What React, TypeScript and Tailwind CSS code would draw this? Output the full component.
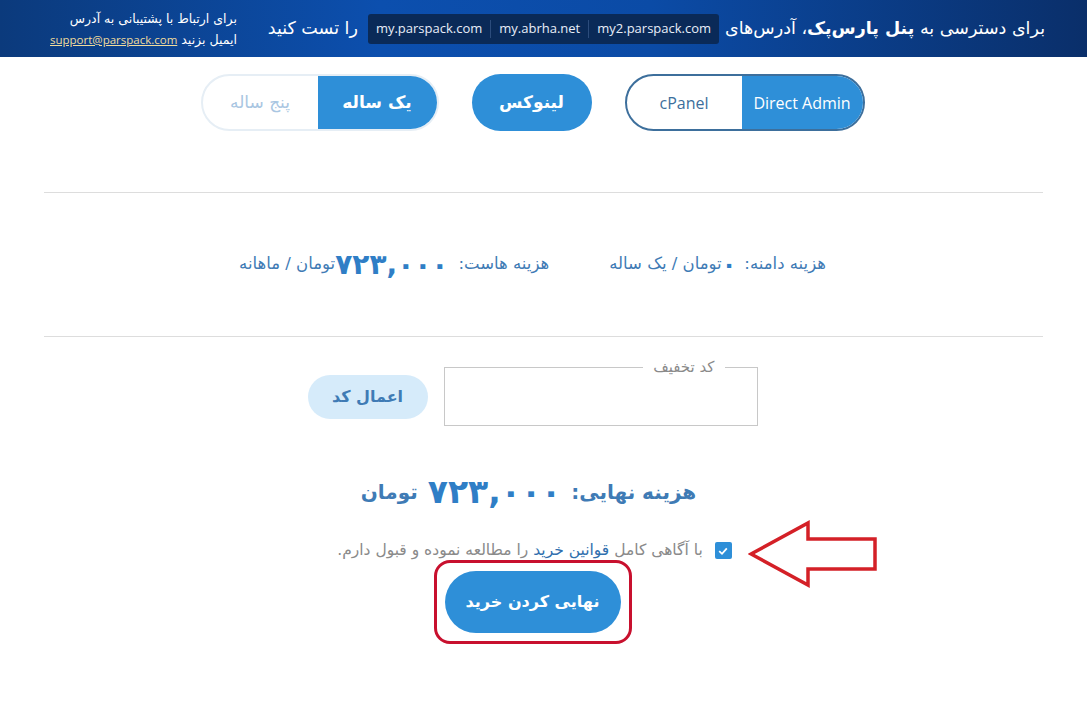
import React from "react";

const fa = { fontFamily: '"DejaVu Sans", "Noto Sans", sans-serif' };
const lat = { fontFamily: '"Open Sans", "Noto Sans", sans-serif' };

function Header() {
  return (
    <div
      className="h-[57px] w-full flex items-center pr-[42px] pl-[50px] text-white"
      style={{ background: "linear-gradient(90deg,#0b3a7c 0%,#0c4fae 35%,#0b4ba6 60%,#0a2f6a 100%)" }}
    >
      <div className="text-[17.5px] whitespace-nowrap" style={fa}>
        برای دسترسی به <b>پنل پارس‌پک</b>، آدرس‌های
      </div>
      <div
        className="mr-[6px] h-[30px] flex items-center rounded-[3px] bg-[#0a2a58] text-[13px] text-[#e8eef8]"
        dir="ltr"
        style={lat}
      >
        <span className="px-[8px]">my.parspack.com</span>
        <span className="w-px h-[18px] bg-[#2c4c7c]" />
        <span className="px-[8px]">my.abrha.net</span>
        <span className="w-px h-[18px] bg-[#2c4c7c]" />
        <span className="px-[8px]">my2.parspack.com</span>
      </div>
      <div className="mr-[10px] text-[17.5px] whitespace-nowrap" style={fa}>
        را تست کنید
      </div>
      <div className="mr-auto text-[12.5px] leading-[21px] whitespace-nowrap" style={fa}>
        <div>برای ارتباط با پشتیبانی به آدرس</div>
        <div>
          ایمیل بزنید{" "}
          <span className="underline text-[#f0dc9c] text-[11.5px]" style={lat}>
            support@parspack.com
          </span>
        </div>
      </div>
    </div>
  );
}

function Toggles() {
  return (
    <div className="flex justify-center items-center gap-[33px] pt-[17px] pr-[22px]" style={fa}>
      <div className="flex h-[57px] w-[240px] rounded-full border-2 border-[#3d6f9c] overflow-hidden" dir="rtl">
        <div className="w-[121px] flex items-center justify-center bg-[#2e8fd8] text-white text-[16px]" style={lat}>
          Direct Admin
        </div>
        <div className="flex-1 flex items-center justify-center text-[#3d6f9c] text-[16px]" style={lat}>
          cPanel
        </div>
      </div>
      <div className="h-[57px] w-[120px] rounded-full bg-[#2e8fd8] text-white font-bold text-[17px] flex items-center justify-center">
        لینوکس
      </div>
      <div className="flex h-[57px] w-[238px] rounded-full border-2 border-[#e6eef5] overflow-hidden">
        <div className="w-[119px] flex items-center justify-center bg-[#2e8fd8] text-white font-bold text-[17px]">
          یک ساله
        </div>
        <div className="flex-1 flex items-center justify-center text-[#a9c6e2] text-[17px]">پنج ساله</div>
      </div>
    </div>
  );
}

function PriceRow() {
  return (
    <div className="flex justify-center items-center gap-[60px] h-[143px] text-[#3f7bb5] text-[16.5px] pr-[22px]" style={fa}>
      <div className="flex items-center">
        <span>هزینه دامنه:</span>
        <span className="mr-[8px] font-bold text-[24px] text-[#2f7ec6]">۰</span>
        <span>تومان / یک ساله</span>
      </div>
      <div className="flex items-center">
        <span>هزینه هاست:</span>
        <span className="mr-[10px] font-bold text-[28px] text-[#2f7ec6]">۷۲۳,۰۰۰</span>
        <span>تومان / ماهانه</span>
      </div>
    </div>
  );
}

function Discount() {
  return (
    <div className="flex justify-center items-start gap-[16px] pt-[22px] pr-[22px]" style={fa}>
      <fieldset className="w-[314px] h-[70px] border border-[#c8c8c8] px-[14px] pb-[6px] -mt-[3px]">
        <legend className="px-[10px] text-[15px] text-[#8a8a8a] mr-[18px]">کد تخفیف</legend>
      </fieldset>
      <button className="mt-[16px] h-[44px] w-[120px] rounded-full bg-[#d6ebfa] text-[#3f7bb5] font-bold text-[16px]">
        اعمال کد
      </button>
    </div>
  );
}

function Final() {
  return (
    <div className="flex flex-col items-center pt-[46px]" style={fa}>
      <div className="flex items-center text-[#3f7bb5] font-bold text-[20px] h-[40px] pr-[30px]">
        <span>هزینه نهایی:</span>
        <span className="mx-[10px] text-[33px] text-[#2f7ec6]">۷۲۳,۰۰۰</span>
        <span>تومان</span>
      </div>
      <div className="relative w-full flex justify-center">
        <div className="flex items-center mt-[27px] text-[15.5px] text-[#8a8a8a] pr-[18px]">
          <span className="w-[17px] h-[17px] rounded-[2px] bg-[#2e8fd8] flex items-center justify-center ml-[12px]">
            <svg width="12" height="12" viewBox="0 0 12 12">
              <path d="M2.2 6.2 L5 8.8 L9.8 3.4" fill="none" stroke="white" strokeWidth="1.8" />
            </svg>
          </span>
          <span>
            با آگاهی کامل <span className="text-[#2f6fae]">قوانین خرید</span> را مطالعه نموده و قبول دارم.
          </span>
        </div>
        <svg className="absolute left-[748px] top-[7px]" width="132" height="70" viewBox="0 0 132 70">
          <path
            d="M3 35 L60 4 L60 20 L127 20 L127 50 L60 50 L60 66 Z"
            fill="white"
            stroke="#d42027"
            strokeWidth="3.5"
            strokeLinejoin="miter"
          />
        </svg>
      </div>
      <div className="mt-[-2px] mr-[22px] rounded-[16px] border-[3px] border-[#c8102e] p-[8px]">
        <button className="h-[62px] w-[176px] rounded-full bg-[#2e8fd8] text-white font-bold text-[16px]">
          نهایی کردن خرید
        </button>
      </div>
    </div>
  );
}

export default function App() {
  return (
    <div dir="rtl" className="w-[1087px] h-[713px] bg-white overflow-hidden">
      <Header />
      <Toggles />
      <div className="mx-[44px] mt-[61px] border-t border-[#dddddd]" />
      <PriceRow />
      <div className="mx-[44px] border-t border-[#dddddd]" />
      <Discount />
      <Final />
    </div>
  );
}
